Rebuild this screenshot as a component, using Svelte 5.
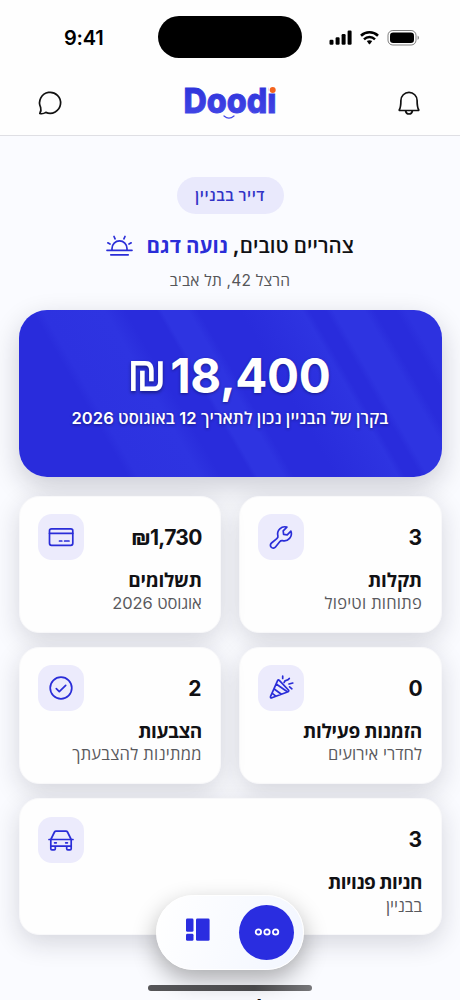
<script>
  const tiles = [
    { value: '3', title: 'תקלות', note: 'פתוחות וטיפול', icon: 'wrench', vw: 13.5, tw: 54, nw: 97.5 },
    { value: '₪1,730', title: 'תשלומים', note: 'אוגוסט 2026', icon: 'card', vw: 70.5, tw: 73.5, nw: 89.5 },
    { value: '0', title: 'הזמנות פעילות', note: 'לחדרי אירועים', icon: 'party', vw: 13.5, tw: 119, nw: 94 },
    { value: '2', title: 'הצבעות', note: 'ממתינות להצבעתך', icon: 'check', vw: 13.5, tw: 63.5, nw: 129.5 },
    { value: '3', title: 'חניות פנויות', note: 'בבניין', icon: 'car', vw: 13.5, wide: true, tw: 94, nw: 36 }
  ];

  // Tunes letter spacing so a line fills its designed measure.
  function measure(node, width) {
    const natural = node.getBoundingClientRect().width;
    const count = node.textContent.length;
    node.style.letterSpacing = (width - natural) / count + 'px';
  }
</script>

<div class="phone" dir="rtl">
  <header>
    <div class="status" dir="ltr">
      <span class="time" use:measure={39.5}>9:41</span>
      <div class="island"></div>
      <svg class="signals" width="92" height="18" viewBox="0 0 92 18">
        <g fill="#000">
          <rect x="1.5" y="10.8" width="4" height="5" rx="1.2" />
          <rect x="7.6" y="8.3" width="4" height="7.5" rx="1.2" />
          <rect x="13.6" y="5" width="4" height="10.8" rx="1.2" />
          <rect x="19.6" y="1.5" width="4" height="14.3" rx="1.2" />
          <path d="M38.8 12.1a4.8 4.8 0 0 1 5.4 0L42.1 14.9a.8.8 0 0 1-1.2 0Z" />
          <rect x="62" y="3.5" width="24" height="10.5" rx="3.2" />
          <path d="M89.6 6.5v4.5c1.8-.8 1.8-3.7 0-4.5Z" opacity=".5" />
        </g>
        <g fill="none" stroke="#000">
          <path d="M33 6.7a12.3 12.3 0 0 1 17 0" stroke-width="2.6" />
          <path d="M36 10.3a8 8 0 0 1 11 0" stroke-width="2.5" />
          <rect x="60" y="1.5" width="28" height="14.5" rx="4.8" stroke-width="1" opacity=".5" />
        </g>
      </svg>
    </div>
    <div class="bar" dir="ltr">
      <svg width="26" height="26" viewBox="0 0 26 26" class="line dark">
        <path d="M3.6 17.3A10.5 10.5 0 1 1 8.8 22.4C7 23.6 4.8 24 2.8 23.5 3.9 21.8 4.2 19.3 3.6 17.3Z" />
      </svg>
      <svg class="logo" width="100" height="54" viewBox="0 -6 100 54">
        <defs>
          <linearGradient id="ink" x1="0" y1="0" x2="0" y2="1">
            <stop offset="0" stop-color="#2a2fd8" />
            <stop offset="1" stop-color="#4549e8" />
          </linearGradient>
        </defs>
        <text x="3.5" y="30.6" textLength="93" lengthAdjust="spacingAndGlyphs" fill="url(#ink)" stroke="url(#ink)">Doodi</text>
        <rect x="88.4" y="1" width="8.5" height="10" fill="#fefefe" />
        <circle cx="92.7" cy="8" r="3" fill="#f4641e" />
        <path d="M44 34q5 4.4 10 0" fill="none" stroke="#4549e8" stroke-width="1.2" stroke-linecap="round" />
      </svg>
      <svg width="26" height="26" viewBox="0 0 26 26" class="line dark">
        <path d="M3.3 19.8C4.8 17.4 4.9 15 4.9 10.5A8 8 0 0 1 21.1 10.5C21.1 15 21.2 17.4 22.7 19.8Q23 20.5 22.2 20.5H3.8Q3 20.5 3.3 19.8ZM9.5 20.8Q10.2 24 13 24T16.5 20.8" />
      </svg>
    </div>
  </header>

  <main>
    <div class="role"><span use:measure={70}>דייר בבניין</span></div>
    <h1>
      <span use:measure={207.5}>צהריים טובים, <b>נועה דגם</b></span>
      <svg width="27" height="22" viewBox="0 0 27 22" class="line sun">
        <path d="M1 15.3H26M4.8 19.8H22.2M6 15V13.4a7.5 7.5 0 0 1 15 0V15M9.1 3.8 8 1.5M17.9 3.8 19 1.5M4 9 1.8 7.8M23 9 25.2 7.8" />
      </svg>
    </h1>
    <p class="address"><span use:measure={120.5}>הרצל 42, תל אביב</span></p>

    <section class="fund">
      <div class="amount" dir="ltr"><span class="shekel">₪</span><span use:measure={160}>18,400</span></div>
      <p><span use:measure={317}>בקרן של הבניין נכון לתאריך 12 באוגוסט 2026</span></p>
    </section>

    <section class="grid">
      {#each tiles as t}
        <article class:wide={t.wide}>
          <div class="top">
            <strong dir="ltr"><span use:measure={t.vw}>{t.value}</span></strong>
            <div class="tile">
              <svg width="28" height="28" viewBox="0 0 28 28" class="line">
                {#if t.icon === 'wrench'}
                  <path d="M23.9 8.1 20.2 11.8 16.6 11.4 16.2 7.8 19.9 4.1A7.2 7.2 0 0 0 10.9 12.9C11.2 14.2 10.8 14.9 9.8 15.7L4.5 20A2.85 2.85 0 1 0 8.5 24L12.7 18.7C13.5 17.7 14.3 17.4 15.5 17.6A7.2 7.2 0 0 0 23.9 8.1Z" />
                {:else if t.icon === 'card'}
                  <rect x="2.5" y="5.8" width="23.3" height="16.5" rx="2" />
                  <path d="M2.5 10.3H25.8M12.5 18H14.8M17.6 18H22" />
                {:else if t.icon === 'party'}
                  <path d="M10.7 6.4 3.6 22.3Q3 24.2 4.9 23.8L21.1 17.7Q22.3 17 21.4 16L12.3 6.3Q11.3 5.3 10.7 6.4ZM9.2 10 20.3 17.7M6.9 14.8 14 20M5 19.2 8.8 22.2M15.7 2.2V4.5M17.1 8.5C18 4.8 20 8 22.3 4.5M22 10 25.8 9M22.6 12.9 24.9 14.8" />
                {:else if t.icon === 'check'}
                  <circle cx="14" cy="14" r="10.8" />
                  <path d="M9.3 14.7 12.3 17.7 18.7 11.4" />
                {:else}
                  <path d="M2 13.5H26M3.8 13.5 7.5 6Q8 5.2 9 5.2H19Q20 5.2 20.5 6L24.2 13.5M3.8 13.5V22.7Q3.8 23.8 4.9 23.8H7.2Q8.3 23.8 8.3 22.7V20.2M19.7 20.2V22.7Q19.7 23.8 20.8 23.8H23.1Q24.2 23.8 24.2 22.7V13.5M3.8 20.2H24.2M7.6 16.8H9.3M18.7 16.8H20.4" />
                {/if}
              </svg>
            </div>
          </div>
          <h2><span use:measure={t.tw}>{t.title}</span></h2>
          <p><span use:measure={t.nw}>{t.note}</span></p>
        </article>
      {/each}
    </section>
    <h3>ל</h3>
  </main>

  <nav dir="ltr">
    <svg width="24" height="24" viewBox="0 0 24 24" fill="#2a2de0">
      <rect x="0" y=".5" width="7.5" height="13.3" rx="1.4" />
      <rect x="0" y="15.8" width="7.5" height="7" rx="1.4" />
      <rect x="10" y=".5" width="13.6" height="22.3" rx="1.4" />
    </svg>
    <div class="more">
      <svg width="26" height="10" viewBox="0 0 26 10" fill="none" stroke="#fff" stroke-width="1.8">
        <circle cx="4.4" cy="5" r="2.7" /><circle cx="13" cy="5" r="2.7" /><circle cx="21.6" cy="5" r="2.7" />
      </svg>
    </div>
  </nav>
  <div class="home"></div>
</div>

<style>
  :global(body) { margin: 0; overflow: hidden; }
  .phone {
    position: relative; width: 460px; height: 1000px; overflow: hidden;
    background: #fafbff; color: #111114;
    font-family: Inter, 'Open Sans', 'Noto Sans', sans-serif;
  }
  .phone * { box-sizing: border-box; }
  h1, h2, h3, p { margin: 0; white-space: nowrap; }
  span { display: inline-block; white-space: pre; }
  header { height: 136px; background: #fefefe; border-bottom: 1px solid #dfdfe4; }
  .status { height: 75px; padding: 16px 40px 0 64px; display: flex; justify-content: space-between; align-items: flex-start; }
  .time { font-size: 20px; font-weight: 600; line-height: 24px; margin-top: 10px; color: #000; }
  .island { width: 144px; height: 42px; border-radius: 21px; background: #000; margin-left: 54.5px; }
  .signals { margin: 13px 0 0 26px; }
  .bar { height: 56px; padding: 0 38px 0 37px; display: flex; justify-content: space-between; align-items: center; }
  .logo { overflow: visible; }
  .logo text { font: 800 34px Inter, sans-serif; stroke-width: .9; }
  .line { fill: none; stroke: #2a2dd8; stroke-width: 1.7; stroke-linecap: round; stroke-linejoin: round; }
  .dark { stroke: #111; }
  main { display: flex; flex-direction: column; align-items: center; }
  .role { margin-top: 40.5px; width: 107px; height: 37.5px; border-radius: 19px; background: #e9e9fc; color: #3233c6; display: flex; align-items: center; justify-content: center; font-size: 15.5px; font-weight: 650; }
  h1 { margin-top: 16.5px; height: 30px; line-height: 30px; font-size: 20.5px; font-weight: 650; display: flex; gap: 13.5px; }
  h1 b { color: #2a2dd8; font-weight: 750; }
  .sun { margin-top: 4px; }
  .address { margin-top: 9.5px; height: 22px; line-height: 22px; font-size: 15.5px; color: #555558; }
  .fund {
    margin-top: 17.5px; width: 423px; height: 167px; border-radius: 28px; color: #fff;
    padding-top: 37.5px; text-align: center;
    box-shadow: 0 10px 28px rgba(20, 20, 40, .2);
    background: linear-gradient(60deg, #292cdc 0 21%, #2d32e0 23%, #2e34e1 35%, #292cdc 39% 45%, #2e34e1 46% 51%, #292cdc 53% 61%, #2e34e1 73%, #292cdc 74.5% 77.5%, #2e34e1 79% 85%, #292cdc 87% 91%, #2d32e0 93%);
    text-shadow: 0 1px 3px rgba(0, 0, 30, .45);
  }
  .amount { display: flex; justify-content: center; align-items: center; height: 56px; font-size: 47.5px; font-weight: 700; gap: 5px; padding-right: 2px; }
  .shekel { font-weight: 400; font-size: 46px; transform: translateY(-2px) scale(1.07, 1.2); transform-origin: 50% 68%; }
  .fund p { font-size: 16.5px; font-weight: 600; line-height: 24px; margin-top: 3px; }
  .grid { width: 423px; margin-top: 19px; display: grid; grid-template-columns: 1fr 1fr; gap: 14.4px 17.5px; }
  article { height: 137px; border-radius: 20px; background: #fefefe; border: 1px solid #f8f8fa; padding: 17.5px 18.5px; box-shadow: 0 8px 26px rgba(25, 25, 45, .16); }
  .wide { grid-column: 1 / -1; }
  .top { display: flex; justify-content: space-between; align-items: center; height: 46px; }
  strong { font-size: 21px; font-weight: 650; }
  .tile { width: 46px; height: 46px; border-radius: 14px; background: #ecebfc; display: grid; place-items: center; }
  h2 { margin-top: 7.5px; font-size: 19px; font-weight: 700; line-height: 26px; }
  article p { font-size: 16.5px; line-height: 20px; margin-top: -.5px; color: #59595d; }
  h3 { font-size: 20px; margin-top: 57px; padding-left: 65px; line-height: 30px; }
  nav {
    position: absolute; left: 155.5px; top: 894.5px; width: 148.5px; height: 75.5px; border-radius: 38px;
    background: linear-gradient(110deg, #fff, #f2f6ff); border: 1px solid #fff;
    display: flex; align-items: center; justify-content: space-between; padding: 0 9px 0 29.5px;
    box-shadow: 0 10px 24px rgba(0, 0, 0, .32);
  }
  nav > svg { margin-top: -4px; }
  .more { width: 55px; height: 55px; border-radius: 50%; background: #2a2de0; display: grid; place-items: center; }
  .home { position: absolute; left: 148px; top: 984.5px; width: 164px; height: 6.5px; border-radius: 4px; background: linear-gradient(90deg, #555558, #48484a 65%, #77777a); }
</style>
